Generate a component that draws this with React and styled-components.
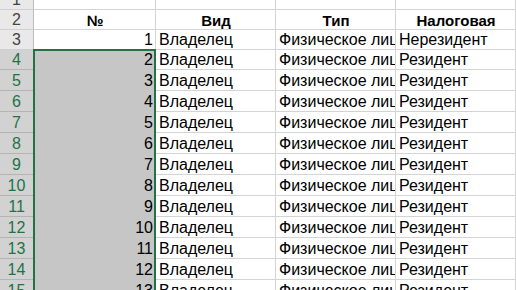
import React from "react";
import styled, { createGlobalStyle } from "styled-components";

const Global = createGlobalStyle`
  html, body { margin: 0; padding: 0; background: #ffffff; }
  body { font-family: "Liberation Sans", Arial, sans-serif; }
`;

const Viewport = styled.div`
  width: 516px;
  height: 290px;
  overflow: hidden;
  background: #ffffff;
`;

const Sheet = styled.div`
  display: grid;
  grid-template-columns: 34px 122px 120px 120px 120px;
  grid-template-rows: repeat(4, 20px) repeat(11, 21px);
  margin-top: -10px;
  position: relative;
`;

const RowHead = styled.div`
  box-sizing: border-box;
  display: flex;
  align-items: center;
  justify-content: center;
  font-size: 16px;
  padding-top: 1px;
  color: ${(p) => (p.$sel ? "#217346" : "#444444")};
  background: ${(p) => (p.$sel ? "#d2d2d2" : "#e9e9e9")};
  border-bottom: 1px solid ${(p) => (p.$sel ? "#b4b4b4" : "#d0d0d0")};
  border-right: 1px solid ${(p) => (p.$sel ? "#217346" : "#bcbcbc")};
`;

const Cell = styled.div`
  box-sizing: border-box;
  font-size: ${(p) => (p.$bold ? "15px" : "16px")};
  color: #000000;
  padding: 1px 2px 0 3px;
  display: flex;
  align-items: center;
  justify-content: ${(p) =>
    p.$align === "right" ? "flex-end" : p.$align === "center" ? "center" : "flex-start"};
  font-weight: ${(p) => (p.$bold ? 700 : 400)};
  white-space: nowrap;
  overflow: hidden;
  background: ${(p) => (p.$sel ? "#c6c6c6" : "#ffffff")};
  border-bottom: 1px solid ${(p) => (p.$sel ? "#c6c6c6" : "#d4d4d4")};
  border-right: 1px solid #d4d4d4;
`;

/* green outline of the selected range, drawn over the cells */
const Selection = styled.div`
  position: absolute;
  grid-column: 2 / 3;
  grid-row: 4 / 16;
  top: -1px;
  left: -1px;
  right: 0;
  bottom: -4px;
  border: 2px solid #217346;
  pointer-events: none;
  z-index: 2;
`;

const rows = [
  { n: 1, cells: ["", "", "", ""] },
  { n: 2, cells: ["№", "Вид", "Тип", "Налоговая"], head: true },
  ...Array.from({ length: 13 }, (_, i) => ({
    n: i + 3,
    cells: [
      String(i + 1),
      "Владелец",
      "Физическое лицо",
      i === 0 ? "Нерезидент" : "Резидент",
    ],
  })),
];

export default function App() {
  return (
    <Viewport>
      <Global />
      <Sheet>
        {rows.map((r) => {
          const sel = r.n >= 4;
          return (
            <React.Fragment key={r.n}>
              <RowHead $sel={sel}>{r.n}</RowHead>
              {r.cells.map((c, j) => (
                <Cell
                  key={j}
                  $bold={r.head}
                  $sel={sel && j === 0}
                  $align={r.head ? "center" : j === 0 ? "right" : "left"}
                >
                  {c}
                </Cell>
              ))}
            </React.Fragment>
          );
        })}
        <Selection />
      </Sheet>
    </Viewport>
  );
}
